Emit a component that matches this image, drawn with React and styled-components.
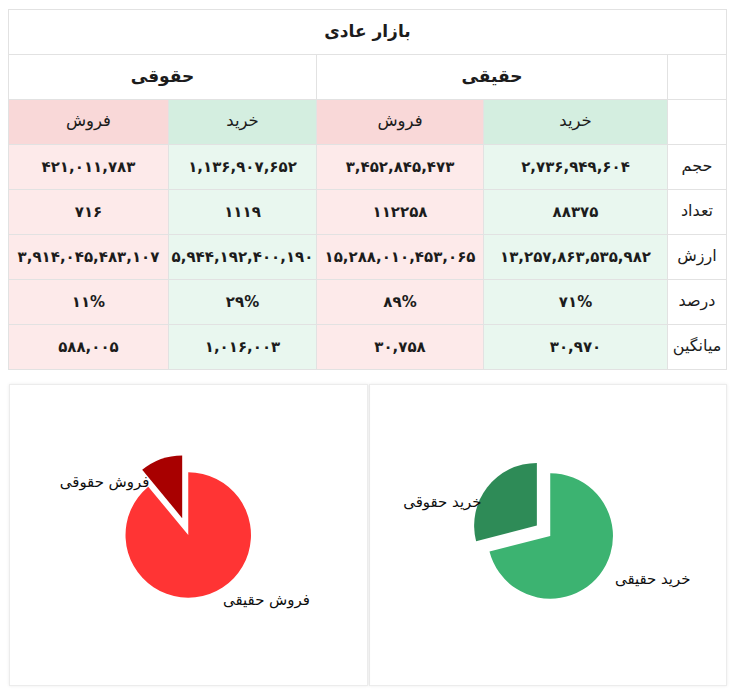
import React from "react";
import styled, { createGlobalStyle } from "styled-components";

const Global = createGlobalStyle`
  html, body { margin: 0; padding: 0; background: #fff; }
  body { font-family: "DejaVu Sans", "Noto Sans", sans-serif; color: #1c1c1c; }
`;

const Page = styled.div`
  direction: rtl;
  padding: 9px 9px 10px 9px;
  display: flex;
  flex-direction: column;
  gap: 14px;
`;

const Table = styled.table`
  width: 100%;
  border-collapse: collapse;
  table-layout: fixed;
  border: 1px solid #e4e4e4;
`;

const palette = {
  buyHead: "#d4eee0",
  sellHead: "#f9d8d8",
  buy: "#e9f7ef",
  sell: "#fdeaea",
  none: "#ffffff",
};

const Cell = styled.td`
  height: 44px;
  padding: 0 2px;
  line-height: 20px;
  border: 1px solid #e2e2e2;
  text-align: center;
  vertical-align: middle;
  white-space: nowrap;
  background: ${(p) => palette[p.$tone || "none"]};
  font-size: 15px;
  font-weight: ${(p) => (p.$bold ? 700 : 400)};
  letter-spacing: ${(p) => (p.$num ? "-0.2px" : "0")};
`;

const HeadCell = styled(Cell).attrs({ as: "th" })`
  height: 41px;
  padding-bottom: 3px;
  font-size: ${(p) => (p.$big ? "17px" : "16.5px")};
`;

const LabelCell = styled(Cell).attrs({ as: "th" })`
  height: 41px;
  padding: 0 2px 3px;
  font-weight: 400;
  font-size: 16px;
  text-align: center;
`;

const Charts = styled.div`
  display: grid;
  grid-template-columns: 1fr 1fr;
  gap: 1px;
`;

const Card = styled.div`
  background: #fff;
  border: 1px solid #ececec;
  box-shadow: 0 0 3px rgba(0, 0, 0, 0.08);
  height: 300px;
  display: flex;
`;

const ChartSvg = styled.svg`
  width: 100%;
  height: 100%;
  direction: ltr;
  font-family: "DejaVu Sans", sans-serif;
`;

function pt(cx, cy, r, a) {
  const rad = (a * Math.PI) / 180;
  return [cx + r * Math.sin(rad), cy - r * Math.cos(rad)];
}

function slice(cx, cy, r, a0, a1) {
  const [x0, y0] = pt(cx, cy, r, a0);
  const [x1, y1] = pt(cx, cy, r, a1);
  const large = a1 - a0 > 180 ? 1 : 0;
  return `M${cx},${cy} L${x0},${y0} A${r},${r} 0 ${large} 1 ${x1},${y1} Z`;
}

function Pie({ cx, cy, r, pct, big, small, explode, labels }) {
  const split = pct * 3.6;
  const mid = (split + 360) / 2;
  const [ox, oy] = pt(0, 0, explode, mid);
  return (
    <ChartSvg viewBox="0 0 358 300">
      <path d={slice(cx, cy, r, 0, split)} fill={big} />
      <path d={slice(cx + ox, cy + oy, r, split, 360)} fill={small} />
      {labels.map((l) => (
        <text
          key={l.text}
          x={l.x}
          y={l.y}
          textAnchor={l.anchor}
          fontSize="15"
          fill="#0d0d0d"
        >
          {l.text}
        </text>
      ))}
    </ChartSvg>
  );
}

const rows = [
  ["حجم", "۲,۷۳۶,۹۴۹,۶۰۴", "۳,۴۵۲,۸۴۵,۴۷۳", "۱,۱۳۶,۹۰۷,۶۵۲", "۴۲۱,۰۱۱,۷۸۳"],
  ["تعداد", "۸۸۳۷۵", "۱۱۲۲۵۸", "۱۱۱۹", "۷۱۶"],
  ["ارزش", "۱۳,۲۵۷,۸۶۳,۵۳۵,۹۸۲", "۱۵,۲۸۸,۰۱۰,۴۵۳,۰۶۵", "۵,۹۴۴,۱۹۲,۴۰۰,۱۹۰", "۳,۹۱۴,۰۴۵,۴۸۳,۱۰۷"],
  ["درصد", "۷۱%", "۸۹%", "۲۹%", "۱۱%"],
  ["میانگین", "۳۰,۹۷۰", "۳۰,۷۵۸", "۱,۰۱۶,۰۰۳", "۵۸۸,۰۰۵"],
];

const tones = ["buy", "sell", "buy", "sell"];

export default function App() {
  return (
    <>
      <Global />
      <Page>
        <Table>
          <colgroup>
            <col style={{ width: 59 }} />
            <col style={{ width: 184 }} />
            <col style={{ width: 167 }} />
            <col style={{ width: 148 }} />
            <col style={{ width: 160 }} />
          </colgroup>
          <thead>
            <tr>
              <HeadCell colSpan={5} $big $bold>بازار عادی</HeadCell>
            </tr>
            <tr>
              <HeadCell />
              <HeadCell colSpan={2} $big $bold>حقیقی</HeadCell>
              <HeadCell colSpan={2} $big $bold>حقوقی</HeadCell>
            </tr>
            <tr>
              <HeadCell />
              <HeadCell $tone="buyHead">خرید</HeadCell>
              <HeadCell $tone="sellHead">فروش</HeadCell>
              <HeadCell $tone="buyHead">خرید</HeadCell>
              <HeadCell $tone="sellHead">فروش</HeadCell>
            </tr>
          </thead>
          <tbody>
            {rows.map(([label, ...vals]) => (
              <tr key={label}>
                <LabelCell>{label}</LabelCell>
                {vals.map((v, i) => (
                  <Cell key={i} $tone={tones[i]} $bold $num>
                    {v}
                  </Cell>
                ))}
              </tr>
            ))}
          </tbody>
        </Table>
        <Charts>
          <Card>
            <Pie
              cx={181}
              cy={151}
              r={63}
              pct={71}
              big="#3cb371"
              small="#2e8b57"
              explode={17}
              labels={[
                { text: "خرید حقوقی", x: 112, y: 122, anchor: "end" },
                { text: "خرید حقیقی", x: 246, y: 199, anchor: "start" },
              ]}
            />
          </Card>
          <Card>
            <Pie
              cx={179}
              cy={150}
              r={63}
              pct={89}
              big="#ff3434"
              small="#a80000"
              explode={18}
              labels={[
                { text: "فروش حقوقی", x: 140, y: 102, anchor: "end" },
                { text: "فروش حقیقی", x: 214, y: 220, anchor: "start" },
              ]}
            />
          </Card>
        </Charts>
      </Page>
    </>
  );
}
